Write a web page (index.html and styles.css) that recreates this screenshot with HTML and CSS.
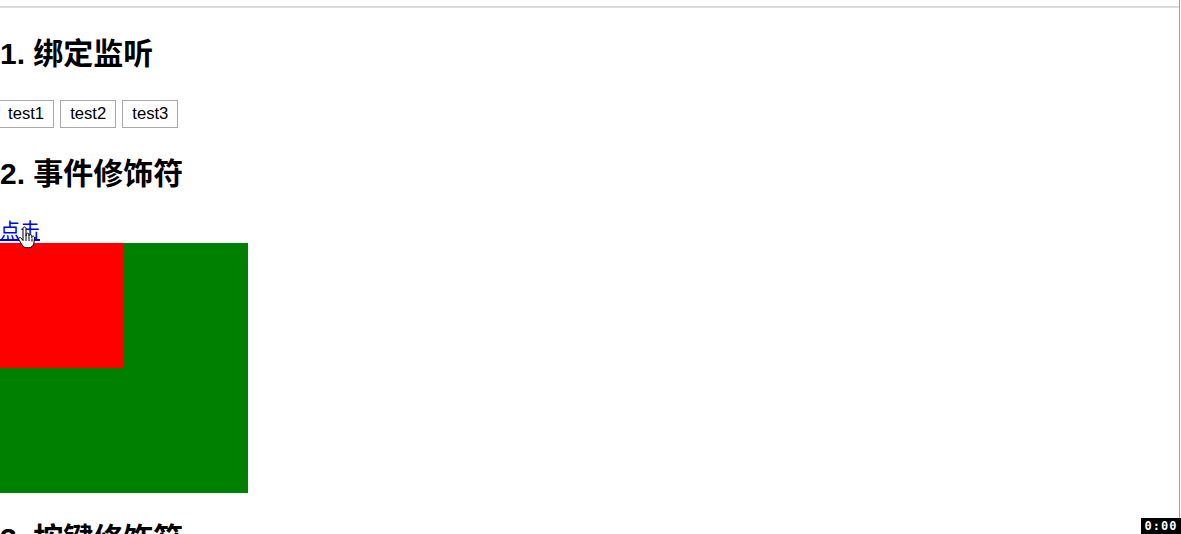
FILE: index.html
```html
<!DOCTYPE html>
<html lang="zh">
<head>
<meta charset="utf-8">
<link rel="stylesheet" href="styles.css">
</head>
<body>
<div class="frame">
  <h2 class="title">1. 绑定监听</h2>
  <div class="btns">
    <button class="btn">test1</button>
    <button class="btn">test2</button>
    <button class="btn">test3</button>
  </div>
  <h2 class="title">2. 事件修饰符</h2>
  <a class="link" href="#">点击</a>
  <div class="outer">
    <div class="inner"></div>
  </div>
  <h2 class="title">3. 按键修饰符</h2>
</div>
<svg class="cursor" width="20" height="24" viewBox="0 0 20 24">
  <path d="M6 2.5c0-1 .7-1.6 1.5-1.6S9 1.5 9 2.5V10l.2-1.6c.2-.9 1-1.3 1.7-1.1.7.2 1.1.8 1 1.6v1.6l.3-1c.3-.8 1-1.100 1.7-.9.6.2 1 .8.9 1.5v1.5l.3-.7c.3-.6 1-.9 1.6-.6.6.3.9.9.8 1.6l-.6 5.2c-.3 2.6-2.4 4.6-5.1 4.6H9.6c-1.800 0-3.3-.9-4.2-2.4L1.9 13.7c-.4-.7-.2-1.5.4-1.9.7-.4 1.5-.2 2 .4L6 14.6z" fill="#fff" stroke="#000" stroke-width="1" stroke-linejoin="round"/>
  <path d="M9 10v5M12 11v4M15 12.5v3" stroke="#000" stroke-width="1"/>
</svg>
<div class="timer">0:00</div>
</body>
</html>
```
FILE: styles.css
```css
html, body {
  margin: 0;
  padding: 0;
  background: #fff;
  height: 100%;
  overflow: hidden;
}
body {
  font-family: "Liberation Sans", "Noto Sans CJK SC", sans-serif;
  position: relative;
}
.frame {
  padding-top: 6px;
  border-right: 1px solid #a0a0a0;
  width: 1180px;
  height: 534px;
  box-sizing: border-box;
}
.frame::before {
  content: "";
  display: block;
  height: 2px;
  background: #dcdcdf;
}
.title {
  font-family: "Liberation Sans", "Noto Sans CJK SC", sans-serif;
  font-size: 30px;
  font-weight: bold;
  line-height: 42px;
  margin: 25px 0;
  color: #000;
}
.btns {
  display: flex;
  gap: 6px;
  margin-left: -2px;
}
.btn {
  font-family: "Liberation Sans", sans-serif;
  font-size: 16.67px;
  height: 28px;
  padding: 0 9px;
  background: #fff;
  border: 1px solid #a9a9a9;
  border-radius: 0;
  color: #000;
  margin: 0;
}
.link {
  display: block;
  width: max-content;
  font-size: 20px;
  line-height: 23px;
  color: #0000ee;
  text-decoration: underline;
}
.outer {
  width: 248px;
  height: 250px;
  background: #008000;
}
.inner {
  width: 123px;
  height: 125px;
  background: #ff0000;
}
.cursor {
  position: absolute;
  left: 17px;
  top: 226px;
}
.timer {
  position: absolute;
  right: 0;
  bottom: 0;
  width: 40px;
  height: 16px;
  background: #000;
  color: #fff;
  font-family: "DejaVu Sans Mono", monospace;
  font-weight: bold;
  font-size: 12px;
  line-height: 16px;
  text-align: center;
  letter-spacing: 1px;
}
```
